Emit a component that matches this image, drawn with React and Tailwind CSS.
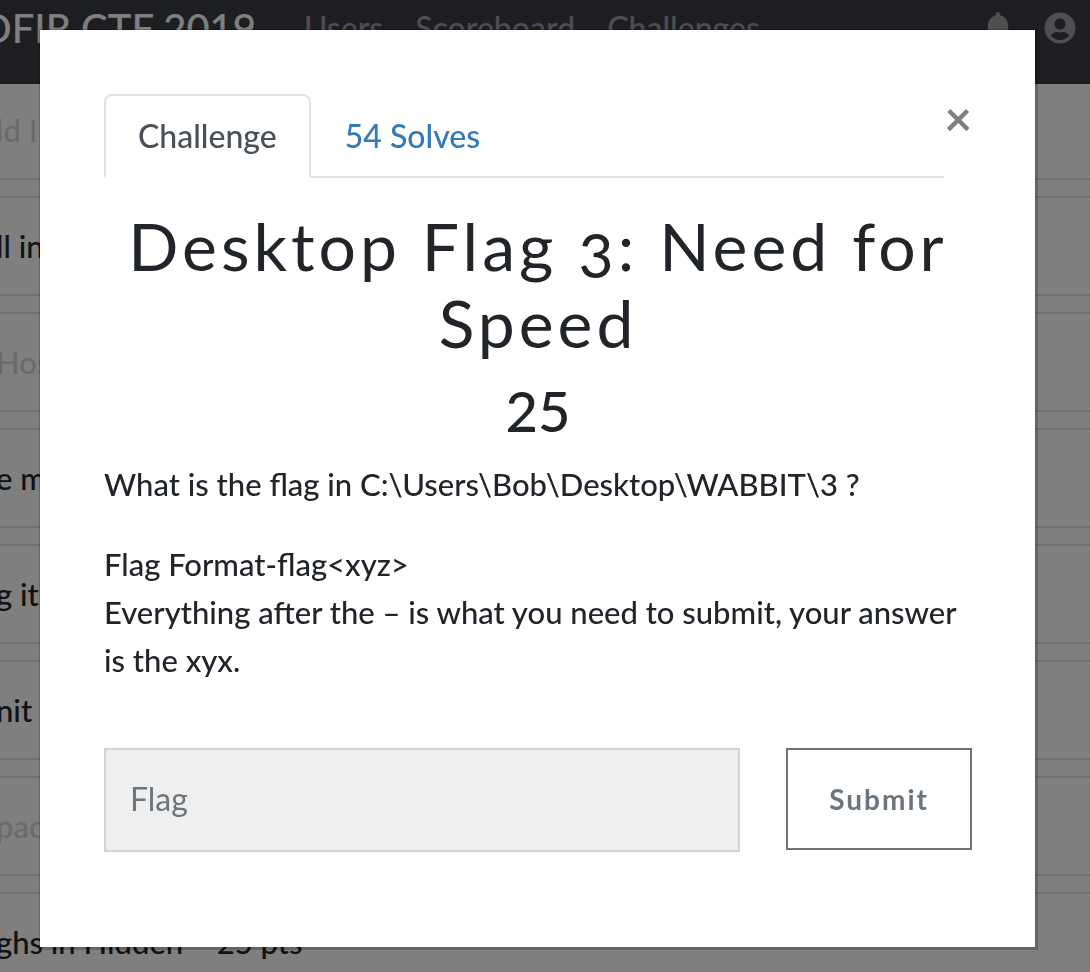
import { useState } from 'react';
import { FaBell, FaUserCircle } from 'react-icons/fa';

const navLinks = ['Users', 'Scoreboard', 'Challenges'];

const challenges = [
  { id: 1, title: 'ld I', solved: true },
  { id: 2, title: 'll in', solved: false },
  { id: 3, title: 'Hos', solved: true },
  { id: 4, title: 'e m', solved: false },
  { id: 5, title: 'g it', solved: false },
  { id: 6, title: 'nit', solved: false },
  { id: 7, title: 'pac', solved: true },
  { id: 8, title: 'ghs in Hidden – 25 pts', solved: false },
];

const Navbar = () => {
  return (
    <nav className="relative flex h-21 items-center bg-[#3a3c44] pr-3.5 pb-7">
      <a
        href="#home"
        className="flex w-64 shrink-0 justify-end whitespace-nowrap text-[40px] leading-14 font-medium text-white"
      >
        DFIR CTF 2019
      </a>
      <div className="ml-8 flex flex-1">
        {navLinks.map((link) => (
          <a key={link} href="#nav" className="px-4 text-[32px] leading-12 font-medium text-white/50">
            {link}
          </a>
        ))}
      </div>
      <div className="flex items-center gap-[30px] text-[32px] text-white/50">
        <a href="#notifications" aria-label="Notifications">
          <FaBell />
        </a>
        <a href="#profile" aria-label="Profile">
          <FaUserCircle />
        </a>
      </div>
    </nav>
  );
};

const ChallengeList = () => {
  return (
    <ul className="-mx-1 -mt-1 flex flex-col gap-4 text-[31px] leading-12 font-medium">
      {challenges.map((item) => (
        <li
          key={item.id}
          className={
            item.solved
              ? 'flex h-25 items-center border-y-2 border-[#e0e0e0] text-[#d4d4d4]'
              : 'flex h-25 items-center border-y-2 border-[#e0e0e0] text-[#212529]'
          }
        >
          {item.title}
        </li>
      ))}
    </ul>
  );
};

const ChallengeModal = () => {
  const [flag, setFlag] = useState('');

  const handleSubmit = (e) => {
    e.preventDefault();
    setFlag('');
  };

  return (
    <div
      role="dialog"
      aria-labelledby="challenge-title"
      className="ml-10 mr-[55px] bg-white pt-16 pr-[63px] pb-[95px] pl-16 text-[32px] leading-12 text-[#212529] shadow-[1px_1px_0_2px_rgba(0,0,0,0.2)]"
    >
      <div className="flex items-start">
        <div role="tablist" className="flex flex-1 border-b-2 border-[#dee2e6]">
          <button
            type="button"
            role="tab"
            aria-selected="true"
            className="-mb-0.5 rounded-t-lg border-2 border-[#dee2e6] border-b-white bg-white px-8 py-4 font-medium text-[#495057]"
          >
            Challenge
          </button>
          <button
            type="button"
            role="tab"
            aria-selected="false"
            className="-mb-0.5 border-2 border-transparent px-8 py-4 font-medium text-[#337ab7]"
          >
            54 Solves
          </button>
        </div>
        <button type="button" aria-label="Close" className="text-5xl leading-12 font-bold text-black/50">
          ×
        </button>
      </div>

      <div className="pt-[29px]">
        <h2
          id="challenge-title"
          className="mb-4 text-center text-[66px] leading-[77px] tracking-[4px] oldstyle-nums"
        >
          Desktop Flag 3: Need for Speed
        </h2>
        <h3 className="mb-4 text-center text-[56px] leading-[67px] font-medium">25</h3>
        <div className="text-[31px] font-medium">
          <p className="mb-8">What is the flag in C:\Users\Bob\Desktop\WABBIT\3 ?</p>
          <p>
            Flag Format-flag&lt;xyz&gt;
            <br />
            Everything after the – is what you need to submit, your answer is the xyx.
          </p>
        </div>
      </div>

      <form onSubmit={handleSubmit} className="mt-16 flex items-start gap-[46px]">
        <input
          type="text"
          name="flag"
          aria-label="Flag"
          placeholder="Flag"
          value={flag}
          onChange={(e) => setFlag(e.target.value)}
          className="h-26 min-w-0 flex-1 border-2 border-[#cdd3de] bg-[#efefef] px-6 pb-1 placeholder:text-[#6c757d]"
        />
        <button
          type="submit"
          className="h-[102px] border-2 border-[#6c757d] px-[41px] text-[28px] font-bold tracking-[2px] text-[#6c757d]"
        >
          Submit
        </button>
      </form>
    </div>
  );
};

export default function App() {
  return (
    <div className="h-screen overflow-hidden bg-white font-[Lato,sans-serif]">
      <Navbar />
      <ChallengeList />
      <div className="fixed inset-0 overflow-hidden bg-black/50 pt-[30px]">
        <ChallengeModal />
      </div>
    </div>
  );
}
